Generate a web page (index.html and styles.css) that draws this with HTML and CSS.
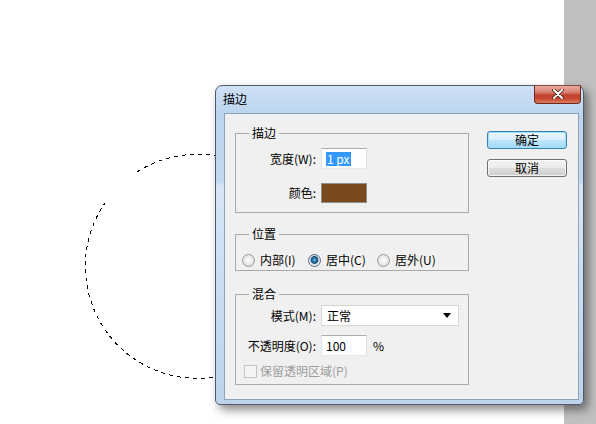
FILE: index.html
```html
<!DOCTYPE html>
<html lang="zh-CN">
<head>
<meta charset="utf-8">
<title>描边</title>
<link rel="stylesheet" href="styles.css">
</head>
<body>
<div class="screen">
  <div class="canvas">
    <svg class="selection" width="564" height="424" viewBox="0 0 564 424">
      <path d="M137,172 A112,112 0 1 1 105,203" fill="none" stroke="#000" stroke-width="1" stroke-dasharray="4 4" shape-rendering="crispEdges"/>
    </svg>
  </div>
  <div class="panel"></div>

  <div class="dialog">
    <div class="titlebar">描边</div>
    <div class="close">
      <svg width="12" height="10" viewBox="0 0 12 10">
        <path d="M2,1 L10,9 M10,1 L2,9" stroke="#4b1a12" stroke-width="3.6" stroke-linecap="round"/>
        <path d="M2,1 L10,9 M10,1 L2,9" stroke="#fff" stroke-width="2" stroke-linecap="round"/>
      </svg>
    </div>
    <div class="client">
      <div class="groups">
        <fieldset class="group g-stroke">
          <legend>描边</legend>
          <div class="form">
            <span class="lbl">宽度(W):</span>
            <div class="field w-small"><span class="sel">1 px</span></div>
            <span class="lbl">颜色:</span>
            <div class="swatch"></div>
          </div>
        </fieldset>

        <fieldset class="group g-pos">
          <legend>位置</legend>
          <div class="radios">
            <span class="ropt o1"><span class="radio"></span>内部(I)</span>
            <span class="ropt o2"><span class="radio on"></span>居中(C)</span>
            <span class="ropt"><span class="radio"></span>居外(U)</span>
          </div>
        </fieldset>

        <fieldset class="group g-blend">
          <legend>混合</legend>
          <div class="form blend">
            <span class="lbl">模式(M):</span>
            <div class="select"><span>正常</span><span class="arrow"></span></div>
            <span class="lbl">不透明度(O):</span>
            <div class="opacity"><div class="field w-small">100</div><span class="pct">%</span></div>
          </div>
          <div class="check"><span class="box"></span>保留透明区域(P)</div>
        </fieldset>
      </div>
      <div class="buttons">
        <div class="btn default">确定</div>
        <div class="btn">取消</div>
      </div>
    </div>
  </div>
</div>
</body>
</html>
```

FILE: styles.css
```css
html, body {
  margin: 0;
  padding: 0;
}
body {
  width: 596px;
  height: 424px;
  overflow: hidden;
  font-family: "Noto Sans CJK SC", "Noto Sans", sans-serif;
  font-size: 12px;
  color: #000;
}
.screen {
  position: relative;
  display: flex;
  width: 596px;
  height: 424px;
}
.canvas {
  position: relative;
  flex: 1;
  background: #fff;
}
.selection {
  position: absolute;
  left: 0;
  top: 0;
}
.panel {
  width: 32px;
  background: #c0c0c0;
}

.dialog {
  position: absolute;
  left: 215px;
  top: 85px;
  width: 369px;
  height: 320px;
  box-sizing: border-box;
  border: 1px solid #4f5a6a;
  border-radius: 7px 7px 5px 5px;
  background: linear-gradient(180deg, #cfe1f5 0, #bcd5ef 27px, #c3d8ee 95px, #d6e6f6 100px, #bdd3eb 100%);
  box-shadow: 4px 5px 10px rgba(0, 0, 0, 0.45);
  display: flex;
  flex-direction: column;
  padding: 0 4px 4px 8px;
}
.titlebar {
  height: 27px;
  display: flex;
  align-items: center;
  padding-bottom: 2px;
  box-sizing: border-box;
  line-height: 14px;
  margin-left: -1px;
}
.close {
  position: absolute;
  top: -1px;
  right: 2px;
  width: 47px;
  height: 19px;
  box-sizing: border-box;
  border: 1px solid #6a2a22;
  border-top-color: #8a4a40;
  border-radius: 0 0 4px 4px;
  background: linear-gradient(180deg, #e9aa9b 0, #d98474 35%, #c0402d 55%, #c64a33 75%, #dd7d5e 100%);
  display: flex;
  align-items: center;
  justify-content: center;
}
.close svg {
  margin-top: -1px;
}
.client {
  flex: 1;
  display: flex;
  background: #f0f0f0;
  border: 1px solid #8ea2bb;
}
.groups {
  padding: 11px 0 0 10px;
  width: 234px;
}
.group {
  margin: 0;
  padding: 0;
  border: 1px solid #a9a9a9;
  min-width: 0;
}
.group legend {
  margin-left: 13px;
  padding: 0 3px;
  line-height: 16px;
}
.g-stroke {
  padding: 7px 0 9px;
}
.g-pos {
  margin-top: 13px;
  padding: 10px 0 2px;
}
.g-blend {
  margin-top: 15px;
  padding: 3px 0 6px;
}
.form {
  display: grid;
  grid-template-columns: 80px auto;
  column-gap: 5px;
  row-gap: 14px;
  align-items: center;
}
.form.blend {
  row-gap: 9px;
}
.lbl {
  text-align: right;
  line-height: 16px;
}
.field {
  height: 21px;
  box-sizing: border-box;
  border: 1px solid;
  border-color: #abadb3 #dbdfe6 #e3e9ef #e2e3ea;
  background: #fff;
  line-height: 17px;
  padding: 1px 0 0 4px;
}
.w-small {
  width: 46px;
}
.sel {
  display: inline-block;
  background: #3399ff;
  color: #fff;
  line-height: 14px;
  padding: 0 1px;
}
.swatch {
  width: 46px;
  height: 20px;
  box-sizing: border-box;
  border: 1px solid #8f8f8f;
  background: #7a4a1e;
}
.radios {
  display: flex;
  align-items: center;
  height: 16px;
  padding-left: 6px;
  line-height: 16px;
}
.ropt {
  display: flex;
  align-items: center;
  gap: 5px;
}
.ropt.o1 { width: 66px; }
.ropt.o2 { width: 69px; }
.radio {
  width: 13px;
  height: 13px;
  box-sizing: border-box;
  border-radius: 50%;
  border: 1px solid #9a9a9a;
  background: radial-gradient(circle at 50% 45%, #ffffff 0, #ebebeb 45%, #cfcfcf 100%);
}
.radio.on {
  border-color: #4d6b85;
  background: radial-gradient(circle at 50% 45%, #8ee0ff 0, #2b7bb0 1.5px, #1d4f78 3.5px, #c9d3dc 4.2px, #f2f2f2 5.5px, #d8d8d8 100%);
}
.select {
  width: 138px;
  height: 21px;
  box-sizing: border-box;
  border: 1px solid #d6d6d6;
  background: #fff;
  display: flex;
  align-items: center;
  justify-content: space-between;
  padding: 0 7px 0 5px;
}
.arrow {
  width: 0;
  height: 0;
  border-left: 4px solid transparent;
  border-right: 4px solid transparent;
  border-top: 5px solid #000;
}
.opacity {
  display: flex;
  align-items: center;
  gap: 6px;
}
.check {
  display: flex;
  align-items: center;
  gap: 3px;
  margin-top: 8px;
  padding-left: 8px;
  height: 14px;
  color: #9d9d9d;
  line-height: 14px;
}
.box {
  width: 13px;
  height: 13px;
  box-sizing: border-box;
  border: 1px solid #c4c4c4;
  background: #f4f4f4;
}
.buttons {
  margin-left: 18px;
  padding-top: 17px;
  display: flex;
  flex-direction: column;
  gap: 10px;
}
.btn {
  width: 80px;
  height: 18px;
  box-sizing: border-box;
  border: 1px solid #707070;
  border-radius: 3px;
  background: linear-gradient(180deg, #f3f3f3 0, #ebebeb 50%, #dddddd 50%, #cfcfcf 100%);
  display: flex;
  align-items: center;
  justify-content: center;
  line-height: 14px;
  box-shadow: inset 0 0 0 1px rgba(255, 255, 255, 0.7);
}
.btn.default {
  border-color: #3c7fb1;
  background: linear-gradient(180deg, #eaf6fd 0, #d9f0fc 50%, #bee6fd 50%, #a7d9f5 100%);
  box-shadow: inset 0 0 0 1px #9be0ff;
}
```
